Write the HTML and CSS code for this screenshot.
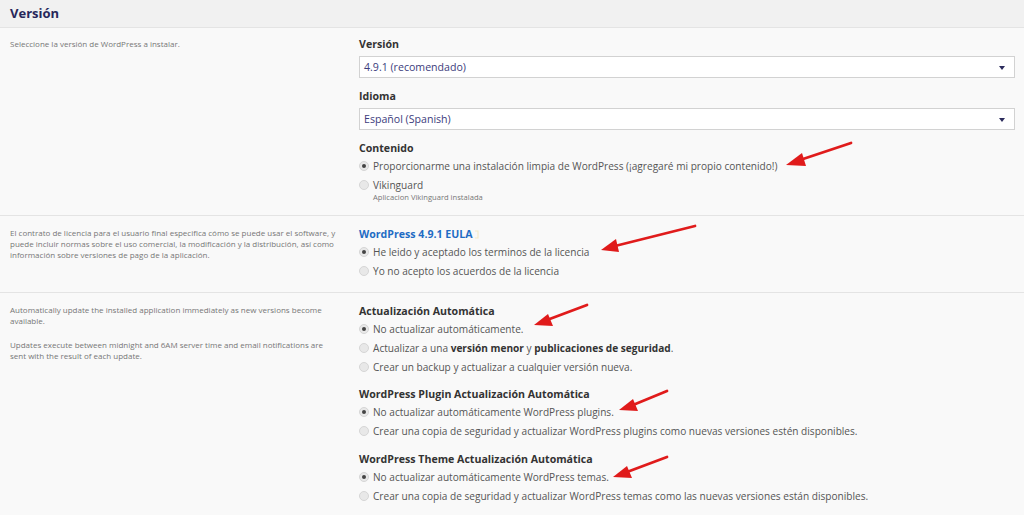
FILE: index.html
```html
<!DOCTYPE html>
<html lang="es">
<head>
    <meta charset="UTF-8">
    <meta name="viewport" content="width=device-width, initial-scale=1.0">
    <title>Versión</title>
    <link rel="stylesheet" href="styles.css">
</head>
<body>
    <div class="page">
        <div class="section-header">Versión</div>

        <div class="row first">
            <div class="help">
                <p>Seleccione la versión de WordPress a instalar.</p>
            </div>
            <div class="fields">
                <div class="field-label">Versión</div>
                <div class="select">4.9.1 (recomendado)<span class="caret"></span></div>
                <div class="field-label gap">Idioma</div>
                <div class="select">Español (Spanish)<span class="caret"></span></div>
                <div class="field-label gap">Contenido</div>
                <label class="radio"><span class="dot checked"></span>Proporcionarme una instalación limpia de WordPress (¡agregaré mi propio contenido!)</label>
                <label class="radio"><span class="dot"></span>Vikinguard</label>
                <div class="sub">Aplicacion Vikinguard instalada</div>
            </div>
        </div>

        <div class="row">
            <div class="help">
                <p>El contrato de licencia para el usuario final especifica cómo se puede usar el software, y puede incluir normas sobre el uso comercial, la modificación y la distribución, así como información sobre versiones de pago de la aplicación.</p>
            </div>
            <div class="fields">
                <div class="eula">WordPress 4.9.1 EULA<svg width="6" height="9" viewBox="0 0 6 9"><path d="M1 1h3v7H1" fill="none" stroke="#f6ecc8" stroke-width="1.2"/></svg></div>
                <label class="radio"><span class="dot checked"></span>He leido y aceptado los terminos de la licencia</label>
                <label class="radio"><span class="dot"></span>Yo no acepto los acuerdos de la licencia</label>
            </div>
        </div>

        <div class="row last">
            <div class="help">
                <p>Automatically update the installed application immediately as new versions become available.</p>
                <p class="second">Updates execute between midnight and 6AM server time and email notifications are sent with the result of each update.</p>
            </div>
            <div class="fields">
                <div class="field-label">Actualización Automática</div>
                <label class="radio"><span class="dot checked"></span>No actualizar automáticamente.</label>
                <label class="radio"><span class="dot"></span>Actualizar a una&nbsp;<b>versión menor</b>&nbsp;y&nbsp;<b>publicaciones de seguridad</b>.</label>
                <label class="radio"><span class="dot"></span>Crear un backup y actualizar a cualquier versión nueva.</label>
                <div class="field-label group">WordPress Plugin Actualización Automática</div>
                <label class="radio"><span class="dot checked"></span>No actualizar automáticamente WordPress plugins.</label>
                <label class="radio"><span class="dot"></span>Crear una copia de seguridad y actualizar WordPress plugins como nuevas versiones estén disponibles.</label>
                <div class="field-label group wide">WordPress Theme Actualización Automática</div>
                <label class="radio"><span class="dot checked"></span>No actualizar automáticamente WordPress temas.</label>
                <label class="radio"><span class="dot"></span>Crear una copia de seguridad y actualizar WordPress temas como las nuevas versiones están disponibles.</label>
            </div>
        </div>

        <!-- red arrows drawn over the screenshot -->
        <svg class="arrows" width="1024" height="515" viewBox="0 0 1024 515">
            <g stroke="#e01b1b" stroke-width="2.8" stroke-linecap="round" fill="#e01b1b">
                <line x1="851" y1="143" x2="800" y2="160"/>
                <polygon stroke="none" points="786,165 802,153 806,166"/>
                <line x1="695" y1="226" x2="615" y2="246"/>
                <polygon stroke="none" points="601,250 616,239 619,252"/>
                <line x1="587" y1="305" x2="547" y2="320"/>
                <polygon stroke="none" points="534,325 548,314 553,326"/>
                <line x1="667" y1="391" x2="633" y2="405"/>
                <polygon stroke="none" points="619,410 633,399 638,411"/>
                <line x1="667" y1="457" x2="627" y2="472"/>
                <polygon stroke="none" points="613,477 627,466 632,478"/>
            </g>
        </svg>
    </div>
</body>
</html>
```

FILE: styles.css
```css
body {
    margin: 0;
    background-color: #f9f9f9;
    font-family: "Open Sans", "DejaVu Sans", sans-serif;
    color: #555;
}
.page {
    position: relative;
    width: 1024px;
    height: 515px;
    overflow: hidden;
}
.section-header {
    height: 27px;
    line-height: 27px;
    padding-left: 10px;
    background-color: #f1f1f1;
    border-bottom: 1px solid #e4e4e4;
    color: #27275a;
    font-weight: bold;
    font-size: 13px;
}
.row {
    display: flex;
    border-bottom: 1px solid #e4e4e4;
    padding: 11px 9px 12px 0;
}
.row.first {
    padding-top: 10px;
    padding-bottom: 13px;
}
.row.first .fields {
    margin-top: -1px;
}
.row.last {
    border-bottom: none;
}
.help {
    width: 329px;
    padding-left: 10px;
    padding-right: 20px;
    font-size: 8px;
    line-height: 11px;
    color: #777;
}
.help p {
    margin: 0;
}
.help p.second {
    margin-top: 13px;
}
.fields {
    flex: 1;
    display: flex;
    flex-direction: column;
    align-items: flex-start;
}
.field-label {
    font-size: 10.6px;
    font-weight: bold;
    color: #333;
    line-height: 14px;
    margin-bottom: 1px;
}
.field-label.gap {
    margin-top: 11px;
}
.field-label.group {
    margin-top: 11px;
}
.field-label.group.wide {
    margin-top: 12px;
}
.select {
    box-sizing: border-box;
    align-self: stretch;
    height: 22px;
    margin-top: 4px;
    padding-left: 4px;
    background-color: #fff;
    border: 1px solid #d2d2d2;
    color: #3c3c7c;
    font-size: 10.6px;
    line-height: 20px;
    position: relative;
}
.caret {
    position: absolute;
    right: 9px;
    top: 9px;
    border-left: 3.5px solid transparent;
    border-right: 3.5px solid transparent;
    border-top: 4px solid #2b2b5c;
}
.radio {
    display: flex;
    align-items: center;
    height: 19px;
    font-size: 10.1px;
    color: #555;
    white-space: nowrap;
}
.radio b {
    color: #333;
}
.dot {
    box-sizing: border-box;
    width: 10px;
    height: 10px;
    margin-right: 4px;
    border-radius: 50%;
    background-color: #e8e8e8;
    border: 1px solid #d6d6d6;
    display: flex;
    align-items: center;
    justify-content: center;
}
.dot.checked::after {
    content: "";
    width: 4px;
    height: 4px;
    border-radius: 50%;
    background-color: #444;
}
.sub {
    font-size: 7.6px;
    color: #777;
    margin-left: 14px;
    margin-top: -2px;
    line-height: 10px;
}
.eula {
    font-size: 10.6px;
    font-weight: bold;
    color: #1f6cc4;
    line-height: 14px;
    margin-bottom: 1px;
    display: flex;
    align-items: center;
    gap: 1px;
}
.arrows {
    position: absolute;
    left: 0;
    top: 0;
    pointer-events: none;
}
```
